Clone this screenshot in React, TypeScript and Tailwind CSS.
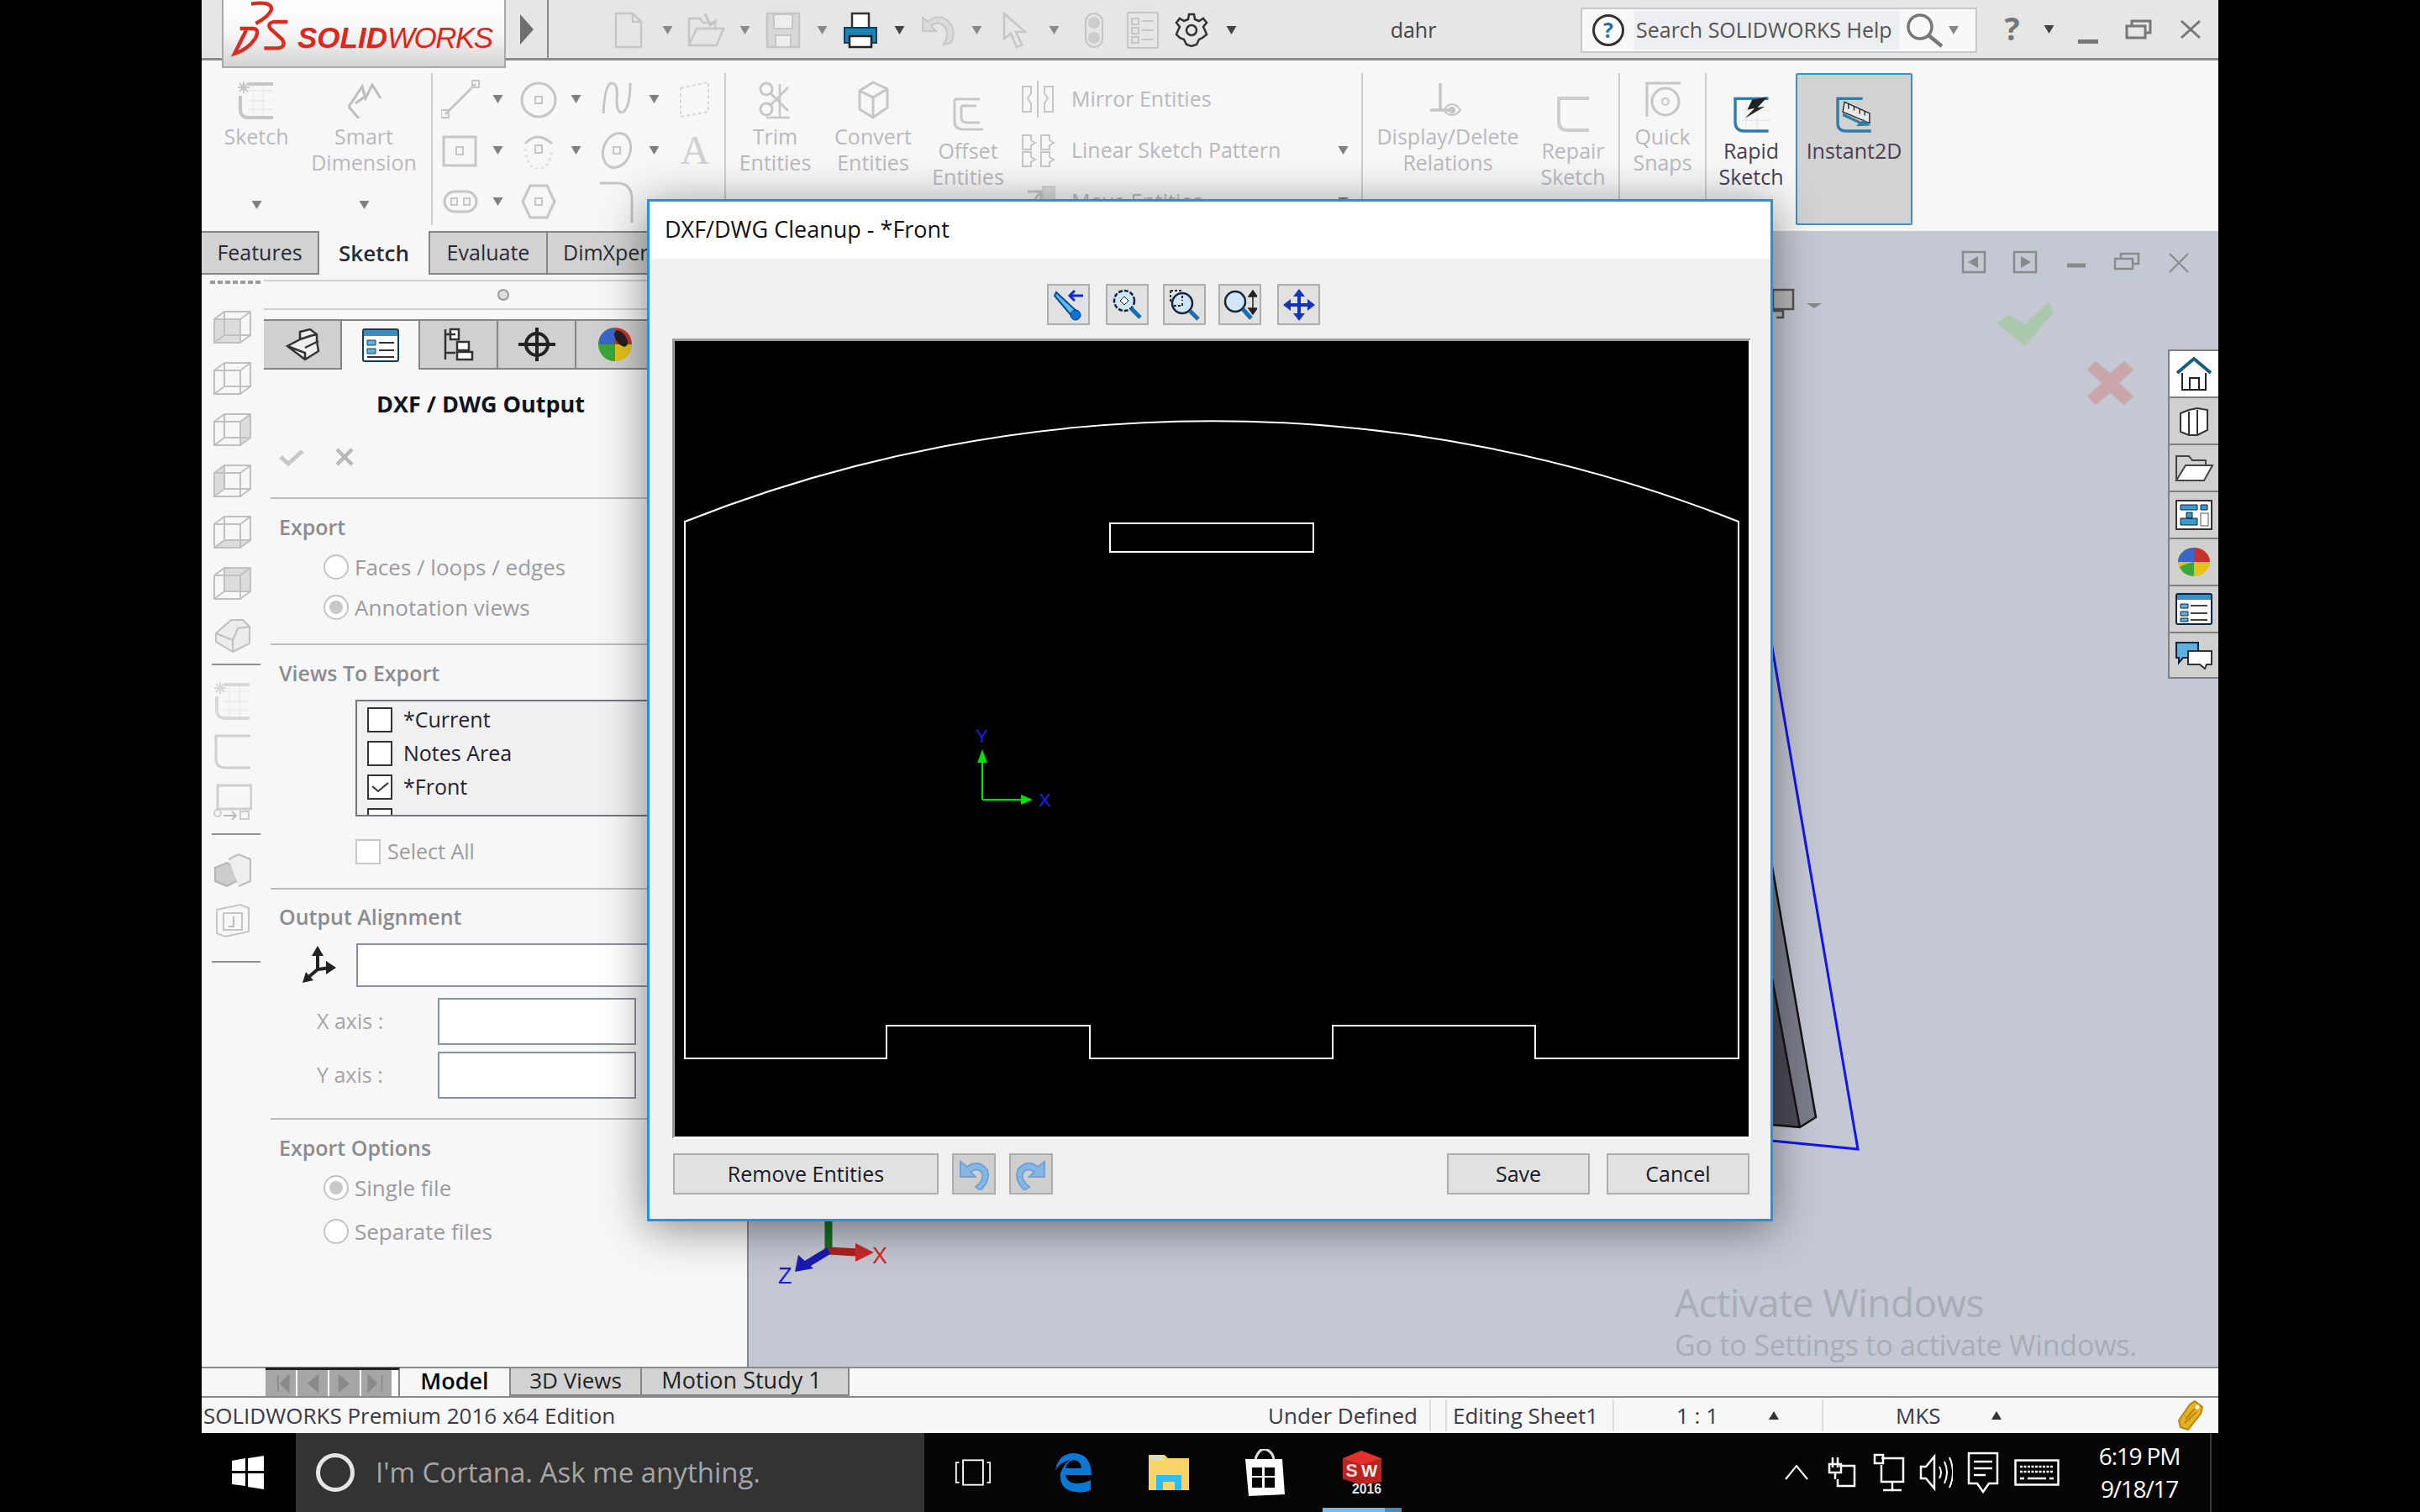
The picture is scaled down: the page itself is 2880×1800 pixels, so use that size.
import React from 'react';

const G = '#c6c6c6';

function Caret({ c = '#808080', up = false, w = 13 }: { c?: string; up?: boolean; w?: number }) {
  return (
    <svg width={w} height={10} viewBox="0 0 12 10">
      <path d={up ? 'M6 0L12 10H0Z' : 'M0 0H12L6 10Z'} fill={c} />
    </svg>
  );
}

function Svg({ w, h, children, vb }: { w: number; h: number; children: React.ReactNode; vb?: string }) {
  return (
    <svg width={w} height={h} viewBox={vb || `0 0 ${w} ${h}`} fill="none">
      {children}
    </svg>
  );
}

function SketchIcon({ color = G, star = true }: { color?: string; star?: boolean }) {
  return (
    <Svg w={48} h={50}>
      {star && <path d="M9 3V17M2 10H16M4 5L14 15M14 5L4 15" stroke={color} strokeWidth="2" />}
      <path d="M14 6H44M5 20V36Q5 46 15 46H44" stroke={color} strokeWidth="4" />
      <path d="M14 14H44M14 26H44M14 36H44M20 8V44M32 8V44" stroke="#ececec" strokeWidth="1.5" />
    </Svg>
  );
}

function RibbonBtn({ w, lines, icon, offset, caret, color = 'text-[#b9b9be]', active }: { w: string; lines: string[]; icon: React.ReactNode; offset?: string; caret?: boolean; color?: string; active?: boolean }) {
  return (
    <div className={`${w} h-[181px] shrink-0 flex flex-col items-center ${offset || ''} ${active ? 'bg-[#d2d2d2] border-2 border-[#3d8fc4] rounded-[2px]' : ''}`}>
      <div className="h-[56px] mt-[4px] flex items-center justify-center shrink-0">{icon}</div>
      {lines.map((l) => (
        <div key={l} className={`h-[31px] leading-[31px] text-[25px] whitespace-nowrap ${color}`}>{l}</div>
      ))}
      {caret && (
        <div className="mt-auto pb-[19px]">
          <Caret />
        </div>
      )}
    </div>
  );
}

function Sep({ className = '' }: { className?: string }) {
  return <div className={`w-[2px] h-[181px] bg-[#cfcfcf] shrink-0 ${className}`} />;
}

function Small({ children, caret }: { children: React.ReactNode; caret?: boolean }) {
  return (
    <div className="h-[61px] w-[93px] flex items-center">
      <div className="w-[66px] flex justify-center">{children}</div>
      {caret && <div className="ml-[5px] flex"><Caret /></div>}
    </div>
  );
}

function Cube({ face }: { face: number }) {
  const faces: Record<number, string> = {
    0: 'M3 12H34V40H3Z',
    1: '',
    2: 'M34 12L46 3V31L34 40Z',
    3: 'M3 12L15 3V31L3 40Z',
    4: 'M3 40L15 31H46L34 40Z',
    5: 'M15 3H46V31H15Z',
  };
  return (
    <Svg w={50} h={44}>
      {faces[face] && <path d={faces[face]} fill="#dcdcdc" />}
      <path d="M3 12H34V40H3ZM3 12L15 3H46V31L34 40M34 12L46 3M15 3V31H46M15 31L3 40" stroke="#c0c0c0" strokeWidth="2" />
    </Svg>
  );
}

function TopBar() {
  return (
    <div className="h-[72px] shrink-0 bg-[#e6e6e6] border-b-[3px] border-[#8c8c8c] flex pl-[24px] relative z-10">
      <div className="w-[338px] h-[81px] shrink-0 border-2 border-t-0 border-[#a8a8a8] bg-gradient-to-b from-white via-[#f6f6f6] to-[#d4d4d4] relative flex items-center pl-[88px]">
        <svg className="absolute left-[7px] top-[0px]" width="74" height="70" viewBox="40 0 222 210" fill="none" stroke="#dc2a1e" strokeWidth="13">
          <path d="M118 14Q192 2 190 34Q182 58 134 84" />
          <path d="M78 102H122Q150 102 132 138Q104 178 58 192L100 108" />
          <path d="M248 78H198Q172 84 188 104L228 140Q244 168 214 172H164" />
        </svg>
        <span className="text-[35px] leading-none italic text-[#e0251b] font-['Liberation_Sans',sans-serif] whitespace-nowrap mt-[10px]">
          <b>SOLID</b><span className="tracking-[-1.5px]">WORKS</span>
        </span>
      </div>
      <div className="w-[49px] shrink-0 flex items-center justify-center pt-[1px]">
        <svg width="16" height="36" viewBox="0 0 16 36"><path d="M0 0L16 18L0 36Z" fill="#6e6e6e" /></svg>
      </div>
      <div className="w-[2px] shrink-0 bg-[#8c8c8c]" />
      <div className="w-[67px] shrink-0" />
      {[
        <Svg w={34} h={44}><path d="M2 2H22L32 12V42H2ZM22 2V12H32" stroke={G} strokeWidth="2.5" /></Svg>,
        <Svg w={46} h={44}><path d="M3 40V8H16L20 13H34V20M3 40L12 20H44L36 40Z" stroke={G} strokeWidth="2.5" /><path d="M22 2L28 16L36 10" stroke={G} strokeWidth="3" /></Svg>,
        <Svg w={42} h={44}><path d="M2 2H40V42H2Z" fill="#d8d8d8" stroke={G} strokeWidth="2.5" /><path d="M10 3H32V20H10ZM12 28H30V42H12Z" fill="#eee" stroke={G} strokeWidth="2" /></Svg>,
        <Svg w={42} h={44}><path d="M11 2H31V20H11Z" fill="#fff" stroke="#333" strokeWidth="2.5" /><path d="M2 19H40V37H2Z" fill="#1c83b5" stroke="#0f3f5e" strokeWidth="2" /><path d="M8 29H34V42H8Z" fill="#fff" stroke="#222" strokeWidth="2.5" /></Svg>,
        <Svg w={42} h={42}><path d="M3 6V22H19L13 16Q22 8 30 18Q35 26 28 38L37 36Q44 20 33 10Q22 0 9 11Z" fill="#dadada" stroke={G} strokeWidth="2" /></Svg>,
        <Svg w={30} h={44}><path d="M2 2V32L10 26L17 42L23 39L16 24H27Z" stroke={G} strokeWidth="2.5" /></Svg>,
      ].map((ic, i) => (
        <div key={i} className="w-[92px] flex items-center shrink-0 pt-[3px]">
          <div className="w-[56px] flex justify-center">{ic}</div>
          <div className="w-[36px] flex justify-center"><Caret c={i === 3 ? '#444' : '#8a8a8a'} /></div>
        </div>
      ))}
      <div className="w-[60px] shrink-0 flex items-center justify-center pt-[3px]">
        <Svg w={24} h={44}><rect x="2" y="2" width="20" height="40" rx="10" stroke={G} strokeWidth="2" /><circle cx="12" cy="13" r="7" fill="#ccc" /><circle cx="12" cy="31" r="7" fill="#ccc" /></Svg>
      </div>
      <div className="w-[56px] shrink-0 flex items-center justify-center pt-[3px]">
        <Svg w={38} h={44}><rect x="1" y="1" width="36" height="42" stroke={G} strokeWidth="2" /><path d="M6 8H14V15H6ZM6 19H14V26H6ZM6 30H14V37H6ZM18 11H32M18 22H32M18 33H32" stroke={G} strokeWidth="2" /></Svg>
      </div>
      <div className="w-[59px] shrink-0 flex items-center justify-center pt-[3px]">
        <Svg w={40} h={42}>
          <circle cx="20" cy="21" r="6" stroke="#333" strokeWidth="2.5" />
          <path d="M17 2H23L24 8L29 10L34 7L38 12L34 17L36 21L38 26L33 30L29 32L26 38L20 40L14 38L11 32L6 30L2 26L4 21L6 17L2 12L6 7L11 10L16 8Z" stroke="#333" strokeWidth="2.5" />
        </Svg>
      </div>
      <div className="w-[36px] shrink-0 flex items-center justify-center pt-[3px]"><Caret c="#444" /></div>
      <div className="w-[398px] shrink-0 text-center text-[25px] leading-[70px] text-[#444]">dahr</div>
      <div className="w-[472px] h-[54px] mt-[9px] border-2 border-[#c8c8c8] bg-[#f8f8f8] flex items-center shrink-0">
        <div className="w-[62px] flex justify-center">
          <div className="w-[38px] h-[38px] rounded-full border-[3px] border-[#333] bg-white flex items-center justify-center text-[25px] font-bold text-[#1c6ea4]">?</div>
        </div>
        <div className="w-[316px] h-[46px] bg-[#eceef2] text-[25px] leading-[44px] text-[#555] whitespace-nowrap pl-[2px]">Search SOLIDWORKS Help</div>
        <div className="w-[58px] flex justify-center">
          <Svg w={46} h={42}><circle cx="18" cy="17" r="14" stroke="#777" strokeWidth="3.5" /><path d="M28 27L44 40" stroke="#777" strokeWidth="4.5" /></Svg>
        </div>
        <Caret c="#888" w={12} />
      </div>
      <div className="w-[65px] ml-[9px] shrink-0 text-center text-[38px] leading-[66px] font-bold text-[#777]">?</div>
      <div className="w-[22px] shrink-0 flex items-center justify-center"><Caret c="#444" /></div>
      <div className="w-[72px] shrink-0 flex items-end justify-center pb-[17px]"><div className="w-[24px] h-[5px] bg-[#777]" /></div>
      <div className="w-[48px] shrink-0 flex items-center justify-center">
        <Svg w={32} h={24}><path d="M8 8V2H30V16H24M2 8H24V22H2Z" stroke="#777" strokeWidth="3" /></Svg>
      </div>
      <div className="w-[69px] shrink-0 pl-[6px] flex items-center justify-center">
        <Svg w={26} h={24}><path d="M2 2L24 22M24 2L2 22" stroke="#777" strokeWidth="3" /></Svg>
      </div>
    </div>
  );
}

function Ribbon() {
  const s = { stroke: G, strokeWidth: 3 };
  return (
    <div className="h-[203px] shrink-0 bg-[#f7f7f7] flex pt-[15px]">
      <RibbonBtn w="w-[130px]" lines={['Sketch']} caret icon={<SketchIcon />} />
      <RibbonBtn
        w="w-[126px]"
        lines={['Smart', 'Dimension']}
        caret
        icon={<Svg w={44} h={44}><path d="M4 30L20 6L24 20L32 4L42 20M4 30L16 44M12 26L26 16" stroke="#bdbdbd" strokeWidth="3" /></Svg>}
      />
      <div className="w-[17px]" />
      <Sep />
      <div className="w-[347px] shrink-0 grid grid-cols-[repeat(4,auto)] content-start justify-start">
        <Small caret><Svg w={46} h={46}><path d="M5 41L41 5" {...s} /><rect x="0" y="36" width="9" height="9" stroke={G} strokeWidth="2" /><rect x="37" y="1" width="8" height="8" stroke={G} strokeWidth="2" /></Svg></Small>
        <Small caret><Svg w={46} h={46}><circle cx="23" cy="24" r="20" {...s} /><rect x="19" y="20" width="8" height="8" stroke={G} strokeWidth="2" /></Svg></Small>
        <Small caret><Svg w={40} h={46}><path d="M4 40Q6 4 14 4Q22 4 20 24Q20 42 28 38Q36 32 36 4" {...s} /></Svg></Small>
        <Small><Svg w={40} h={46}><path d="M3 10L36 3V38L3 44Z" stroke="#d6d6d6" strokeWidth="2" strokeDasharray="4 3" /></Svg></Small>
        <Small caret><Svg w={46} h={44}><rect x="3" y="6" width="38" height="34" {...s} /><rect x="18" y="18" width="8" height="9" stroke={G} strokeWidth="2" /></Svg></Small>
        <Small caret><Svg w={44} h={44}><path d="M6 14Q20 -2 38 14" {...s} /><path d="M6 20Q8 44 22 44Q36 44 38 20" stroke="#e0e0e0" strokeWidth="3" strokeDasharray="3 4" /><rect x="18" y="16" width="8" height="9" stroke={G} strokeWidth="2" /></Svg></Small>
        <Small caret><Svg w={40} h={48}><ellipse cx="20" cy="24" rx="16" ry="21" transform="rotate(20 20 24)" {...s} /><rect x="16" y="20" width="8" height="8" stroke={G} strokeWidth="2" /></Svg></Small>
        <Small><span className="text-[48px] leading-none text-[#d0d0d0] font-['Liberation_Serif',serif]">A</span></Small>
        <Small caret><Svg w={42} h={30}><rect x="2" y="3" width="38" height="24" rx="12" {...s} /><rect x="10" y="11" width="7" height="8" stroke={G} strokeWidth="2" /><rect x="25" y="11" width="7" height="8" stroke={G} strokeWidth="2" /></Svg></Small>
        <Small><Svg w={42} h={44}><path d="M11 3H31L40 22L31 41H11L2 22Z" {...s} /><rect x="17" y="18" width="8" height="8" stroke={G} strokeWidth="2" /></Svg></Small>
        <Small><Svg w={44} h={50}><path d="M2 3H22Q40 3 40 22V50" {...s} /></Svg></Small>
      </div>
      <Sep />
      <RibbonBtn w="w-[117px]" lines={['Trim', 'Entities']} icon={<Svg w={42} h={46}><circle cx="10" cy="10" r="7" {...s} /><circle cx="10" cy="34" r="7" {...s} /><path d="M14 14L36 36M14 30L36 8M26 4V44M10 44H38" stroke={G} strokeWidth="2.5" /></Svg>} />
      <RibbonBtn w="w-[116px]" lines={['Convert', 'Entities']} icon={<Svg w={40} h={46}><path d="M20 2L37 10V32L20 44L4 34V12ZM4 12L20 20L37 10M20 20V44" {...s} /></Svg>} />
      <RibbonBtn w="w-[110px]" offset="pt-[17px]" lines={['Offset', 'Entities']} icon={<Svg w={40} h={44}><path d="M4 4H34M4 4V30Q4 40 14 40H38M12 12H30M12 12V26Q12 32 20 32H34" stroke="#c8c8c8" strokeWidth="3" /></Svg>} />
      <div className="w-[413px] shrink-0">
        {[
          ['Mirror Entities', <Svg w={42} h={46}><path d="M20 1V45" stroke={G} strokeWidth="2" /><path d="M2 8H12V16L8 22L12 28V38H2ZM38 8H28V16L32 22L28 28V38H38Z" stroke={G} strokeWidth="2" /></Svg>, false],
          ['Linear Sketch Pattern', <Svg w={42} h={40}><path d="M2 2H12V8L17 11L12 14V19H2ZM24 2H34V8L39 11L34 14V19H24ZM2 22H12V28L17 31L12 34V39H2ZM24 22H34V28L39 31L34 34V39H24Z" stroke={G} strokeWidth="2" /></Svg>, true],
          ['Move Entities', <Svg w={42} h={40}><path d="M2 38L22 10M8 8H24V24" stroke={G} strokeWidth="3" /><rect x="26" y="2" width="14" height="34" fill="#ddd" stroke={G} /></Svg>, true],
        ].map(([t, ic, car], i) => (
          <div key={i} className="h-[61px] flex items-center pl-[8px]">
            <div className="w-[42px] flex justify-center">{ic as React.ReactNode}</div>
            <div className="w-[310px] pl-[18px] text-[25px] text-[#b9b9be] whitespace-nowrap">{t as string}</div>
            {car ? <div className="pl-[25px] flex"><Caret /></div> : null}
          </div>
        ))}
      </div>
      <Sep />
      <RibbonBtn w="w-[202px]" lines={['Display/Delete', 'Relations']} icon={<Svg w={46} h={44}><path d="M14 2V34M2 34H26" stroke={G} strokeWidth="3.5" /><path d="M18 34Q28 20 38 34Q28 46 18 34Z" stroke={G} strokeWidth="2" /><circle cx="28" cy="34" r="4" fill={G} /></Svg>} />
      <RibbonBtn w="w-[96px]" offset="pt-[17px]" lines={['Repair', 'Sketch']} icon={<Svg w={42} h={44}><path d="M40 3H4V30Q4 41 14 41H40" stroke="#cdcdcd" strokeWidth="4" /></Svg>} />
      <div className="w-[6px]" />
      <Sep />
      <RibbonBtn w="w-[101px]" lines={['Quick', 'Snaps']} icon={<Svg w={44} h={44}><path d="M1 2H43M3 2V42" stroke={G} strokeWidth="3" /><circle cx="25" cy="24" r="16" {...s} /><circle cx="25" cy="24" r="4" stroke={G} strokeWidth="2" /></Svg>} />
      <Sep />
      <RibbonBtn
        w="w-[106px]"
        offset="pt-[17px]"
        color="text-[#4a3f55]"
        lines={['Rapid', 'Sketch']}
        icon={<Svg w={47} h={47} vb="485 105 140 140"><path d="M520 160H620M520 195H620M535 130V235M575 150V235" stroke="#e4e4e4" strokeWidth="3" /><path d="M615 118H497V200Q497 233 530 233H615" stroke="#2f7da6" strokeWidth="10" /><path d="M612 112L557 122L540 158L566 152L532 188L602 146L576 150Z" fill="#222" /></Svg>}
      />
      <RibbonBtn
        w="w-[139px]"
        active
        offset="pt-[15px]"
        color="text-[#4a3f55]"
        lines={['Instant2D']}
        icon={<Svg w={47} h={47} vb="850 105 140 140"><path d="M950 118H862V205Q862 233 890 233H980" stroke="#2f7da6" strokeWidth="10" /><path d="M886 130L975 170V205L880 165Z" fill="#e8e8e8" stroke="#222" strokeWidth="4" /><path d="M900 137V155M920 146V160M940 154V172M958 162V178" stroke="#222" strokeWidth="4" /><path d="M880 168L945 200L952 190L978 214L928 216L936 206L880 180Z" fill="#2f7da6" /></Svg>}
      />
    </div>
  );
}

function Line() {
  return <div className="h-[2px] bg-[#bdbdbd] ml-[8px]" />;
}

function Label({ children }: { children: React.ReactNode }) {
  return <div className="h-[34px] leading-[34px] text-[25px] font-semibold text-[#8c8c90] pl-[10px] whitespace-nowrap">{children}</div>;
}

function Radio({ label, on, cls }: { label: string; on?: boolean; cls: string }) {
  return (
    <div className={`flex items-center pl-[63px] ${cls}`}>
      <div className="w-[30px] h-[30px] rounded-full border-2 border-[#c4c4c4] bg-white flex items-center justify-center shrink-0">
        {on && <div className="w-[16px] h-[16px] rounded-full bg-[#c8c8c8]" />}
      </div>
      <span className="ml-[7px] text-[26px] text-[#9b9ba0] whitespace-nowrap">{label}</span>
    </div>
  );
}

function Check({ on }: { on?: boolean }) {
  return (
    <div className="w-[30px] h-[30px] border-2 border-[#333] bg-white shrink-0 flex items-center justify-center">
      {on && <Svg w={24} h={18}><path d="M3 8L10 14L22 4" stroke="#333" strokeWidth="2" /></Svg>}
    </div>
  );
}

function PM() {
  const tabs = [
    <Svg w={42} h={40}><path d="M3 22L18 14V5L30 2L38 8V16L40 28L24 38Z M18 14L30 10L38 8M24 24L40 16M3 22L24 30V38" stroke="#333" strokeWidth="2.5" fill="#eee" /></Svg>,
    <Svg w={44} h={40}><rect x="1" y="1" width="42" height="38" rx="2" fill="#fff" stroke="#0f3f5e" strokeWidth="2" /><rect x="2" y="2" width="40" height="7" fill="#3a8fc0" /><path d="M6 14H16V20H6ZM6 24H16V30H6Z" fill="#5fb0da" stroke="#0f3f5e" /><path d="M20 17H38M20 26H38M6 34H38" stroke="#333" strokeWidth="2" /></Svg>,
    <Svg w={36} h={40}><path d="M2 2V38M2 8H14M2 30H14M8 2H18V14H8ZM16 17H30V27H16ZM16 29H34V38H16Z" stroke="#333" strokeWidth="2.5" fill="#fff" /></Svg>,
    <Svg w={44} h={40}><circle cx="22" cy="20" r="13" stroke="#222" strokeWidth="4" /><path d="M0 20H44M22 0V40" stroke="#222" strokeWidth="4" /></Svg>,
    <Svg w={44} h={40}><circle cx="22" cy="20" r="20" fill="#e3c21b" /><path d="M2 20A20 20 0 0 1 22 0V20Z" fill="#3a66c8" /><path d="M22 0A20 20 0 0 1 42 20H22Z" fill="#c8322e" /><path d="M2 20H22V40A20 20 0 0 1 2 20Z" fill="#3aa63c" /><ellipse cx="29" cy="13" rx="6" ry="11" fill="#222" transform="rotate(-35 29 13)" /></Svg>,
  ];
  return (
    <div className="w-[516px] shrink-0">
      <div className="h-[8px] border-b-2 border-[#cfcfcf]" />
      <div className="h-[34px] flex items-center justify-center border-b-2 border-[#cfcfcf] pl-[54px]">
        <div className="w-[14px] h-[14px] rounded-full border-2 border-[#999] bg-[#ddd]" />
      </div>
      <div className="mt-[11px] h-[60px] flex">
        {tabs.map((t, i) => (
          <div key={i} className={`w-[93px] h-[60px] shrink-0 flex items-center justify-center border-t-2 border-r-2 border-[#858585] ${i === 1 ? 'bg-[#f7f7f7] border-b-0' : 'bg-[#d0d0d0] border-b-2'}`}>{t}</div>
        ))}
        <div className="flex-1 bg-[#d0d0d0] border-t-2 border-b-2 border-[#858585]" />
      </div>
      <div className="h-[82px] flex items-center justify-center text-[27px] font-bold text-[#10131c] whitespace-nowrap">DXF / DWG Output</div>
      <div className="h-[70px] flex items-start pt-[10px] pl-[18px]">
        <Svg w={30} h={24}><path d="M2 12L11 20L28 5" stroke="#c6c6c6" strokeWidth="5" /></Svg>
        <div className="w-[36px]" />
        <Svg w={24} h={24}><path d="M3 3L21 21M21 3L3 21" stroke="#b8b8b8" strokeWidth="4.5" /></Svg>
      </div>
      <Line />
      <div className="h-[172px] pt-[16px] ml-[8px]">
        <Label>Export</Label>
        <Radio cls="h-[48px] mt-[7px]" label="Faces / loops / edges" />
        <Radio cls="h-[48px]" on label="Annotation views" />
      </div>
      <Line />
      <div className="h-[289px] pt-[16px] ml-[8px]">
        <Label>Views To Export</Label>
        <div className="mt-[15px] ml-[101px] h-[139px] border-2 border-[#75757d] border-r-0 bg-[#f0f0f0] pl-[12px] pt-[2px] overflow-hidden">
          {[['*Current', false], ['Notes Area', false], ['*Front', true], ['', false]].map(([t, on], i) => (
            <div key={i} className="h-[40px] flex items-center">
              <Check on={on as boolean} />
              <span className="ml-[13px] text-[25px] text-[#222230]">{t as string}</span>
            </div>
          ))}
        </div>
        <div className="mt-[27px] ml-[101px] h-[30px] flex items-center">
          <div className="w-[30px] h-[30px] border-2 border-[#c8c8c8] bg-white" />
          <span className="ml-[8px] text-[25px] text-[#9b9ba0]">Select All</span>
        </div>
      </div>
      <Line />
      <div className="h-[272px] pt-[15px] ml-[8px]">
        <Label>Output Alignment</Label>
        <div className="mt-[15px] h-[52px] flex items-center">
          <div className="w-[102px] pl-[36px]">
            <Svg w={44} h={46}><path d="M20 4V28M20 28L36 26M20 28L6 40" stroke="#222" strokeWidth="4" /><path d="M20 0L27 12H13ZM42 26L30 34V18ZM2 44L6 31L15 41Z" fill="#222" /></Svg>
          </div>
          <div className="flex-1 h-[52px] border-2 border-[#8b8fa3] bg-white" />
        </div>
        <div className="mt-[13px] h-[56px] flex items-center">
          <div className="w-[199px] pl-[55px] text-[25px] text-[#a4a4a8]">X axis :</div>
          <div className="w-[236px] h-[56px] border-2 border-[#8b8fa3] bg-white" />
        </div>
        <div className="mt-[8px] h-[56px] flex items-center">
          <div className="w-[199px] pl-[55px] text-[25px] text-[#a4a4a8]">Y axis :</div>
          <div className="w-[236px] h-[56px] border-2 border-[#8b8fa3] bg-white" />
        </div>
      </div>
      <Line />
      <div className="pt-[16px] ml-[8px]">
        <Label>Export Options</Label>
        <Radio cls="h-[40px] mt-[11px]" on label="Single file" />
        <Radio cls="h-[40px] mt-[12px]" label="Separate files" />
      </div>
    </div>
  );
}

function LeftToolbar() {
  const sep = 'h-[2px] bg-[#8f8f8f] w-[58px] ml-[12px]';
  const cell = 'h-[61px] flex items-center justify-center';
  return (
    <div className="w-[74px] shrink-0">
      <div className="h-[18px] flex items-center justify-center gap-[3px] pl-[6px]">
        {[0, 1, 2, 3, 4, 5, 6].map((i) => <div key={i} className="w-[6px] h-[4px] bg-[#9a9a9a]" />)}
      </div>
      <div className="mt-[14px]">
        {[0, 1, 2, 3, 4, 5].map((f) => <div key={f} className={cell}><Cube face={f} /></div>)}
        <div className={cell}>
          <Svg w={44} h={44}><path d="M2 20L20 4H34L42 12V32L22 42L2 30Z" fill="#ececec" stroke="#c0c0c0" strokeWidth="2" /><path d="M2 20L22 28V42M22 28L28 14L42 12" stroke="#c0c0c0" strokeWidth="2" /></Svg>
        </div>
      </div>
      <div className={`mt-[4px] ${sep}`} />
      <div className="mt-[11px]">
        <div className={cell}><SketchIcon color="#d8d8d8" /></div>
        <div className={cell}><Svg w={46} h={44}><path d="M44 3H3V30Q3 41 14 41H44" stroke="#cfcfcf" strokeWidth="3" /></Svg></div>
        <div className={cell}><Svg w={46} h={46}><rect x="5" y="2" width="40" height="28" stroke="#cfcfcf" strokeWidth="3" /><circle cx="5" cy="35" r="4" stroke="#ccc" strokeWidth="2" /><path d="M12 38H26M22 33L27 38L22 43" stroke="#bbb" strokeWidth="2" /><rect x="32" y="33" width="10" height="9" stroke="#ccc" strokeWidth="2" /></Svg></div>
      </div>
      <div className={`mt-[6px] ${sep}`} />
      <div className="mt-[11px]">
        <div className={cell}><Svg w={46} h={42}><path d="M2 18L16 12L28 18V34L16 40L2 34Z" fill="#ccc" stroke="#b5b5b5" strokeWidth="2" /><path d="M18 8L30 2L44 8V34L30 40" fill="#eee" stroke="#bdbdbd" strokeWidth="2" /></Svg></div>
        <div className="h-[60px] flex items-center justify-center"><Svg w={42} h={42}><path d="M2 8L30 2L40 6V34L12 40L2 36Z" stroke="#c6c6c6" strokeWidth="2" /><path d="M10 12H32V32H10Z" stroke="#c6c6c6" strokeWidth="2" /><path d="M22 16V28H16" stroke="#bbb" strokeWidth="2" /></Svg></div>
      </div>
      <div className={`mt-[18px] ${sep}`} />
    </div>
  );
}

function Tabs() {
  const t = 'h-[50px] flex items-center justify-center text-[25px] shrink-0 border-t-2 border-r-2 border-[#858585] text-[#2a2a36]';
  return (
    <div className="h-[52px] shrink-0 flex bg-[#cfcfcf] border-b-2 border-[#858585]">
      <div className={`${t} w-[140px] bg-[#d2d2d2]`}>Features</div>
      <div className="h-[52px] flex items-center justify-center shrink-0 w-[130px] bg-[#f7f7f7] font-semibold text-[26px] text-[#2a2a36] relative z-[1]">Sketch</div>
      <div className={`${t} w-[142px] bg-[#d2d2d2] border-l-2`}>Evaluate</div>
      <div className={`${t} w-[239px] bg-[#d2d2d2] justify-start pl-[18px]`}>DimXpert</div>
    </div>
  );
}

function Viewport() {
  return (
    <div className="flex-1 relative bg-[#c4c8d3] overflow-hidden">
      <svg className="absolute left-0 top-0" width="1749" height="1352" viewBox="891 275 1749 1352" fill="none">
        <path d="M2108 1026L2161 1330L2142 1342L2108 1162Z" fill="#7b7e8b" />
        <path d="M2108 1160L2142 1342L2108 1339Z" fill="#4a4b55" />
        <path d="M2108 1026L2161 1330L2142 1342L2108 1339M2108 1160L2142 1342" stroke="#141414" strokeWidth="2.5" />
        <path d="M2100 718L2211 1368L2108 1358" stroke="#1414f0" strokeWidth="3" />
        <path d="M2110 345H2134V368H2110ZM2114 378H2122V370H2110" stroke="#555" strokeWidth="2.5" fill="#bbb" />
        <path d="M2150 361H2168L2159 367Z" fill="#888" />
        <path d="M986 1454V1489" stroke="#166d25" strokeWidth="9" />
        <path d="M986 1489L1020 1491" stroke="#b02020" strokeWidth="9" />
        <path d="M1018 1480L1040 1491L1018 1502Z" fill="#c92b2b" />
        <path d="M986 1489L958 1506" stroke="#1a1ab4" strokeWidth="9" />
        <path d="M946 1514L950 1494L968 1510Z" fill="#1a1ab4" />
        <text x="1038" y="1504" fontSize="27" fill="#e02020" fontFamily="Liberation Sans">X</text>
        <text x="926" y="1528" fontSize="27" fill="#1a1ae0" fontFamily="Liberation Sans">Z</text>
        <g stroke="#8a8a8a" strokeWidth="2.5">
          <rect x="2336" y="300" width="26" height="24" />
          <rect x="2397" y="300" width="26" height="24" />
          <path d="M2460 316H2482" strokeWidth="5" />
          <path d="M2524 308V302H2545V314H2539M2517 308H2538V320H2517Z" />
          <path d="M2582 302L2604 324M2604 302L2582 324" strokeWidth="2" />
        </g>
        <path d="M2354 305V319L2342 312ZM2405 305V319L2417 312Z" fill="#8a8a8a" />
        <path d="M2376 385L2390 375L2410 386L2438 360L2444 372L2410 412Z" fill="#a9c8ae" />
        <path d="M2484 440L2494 430L2511 444L2528 430L2539 440L2522 456L2539 472L2528 482L2511 468L2494 482L2484 472L2501 456Z" fill="#c9a6aa" />
      </svg>
      <div className="absolute right-0 top-[141px] w-[60px] border-l-2 border-[#808080] flex flex-col">
        {[
          <Svg w={44} h={42}><path d="M2 20L22 3L42 20" stroke="#185c82" strokeWidth="4" /><path d="M8 20V40H36V20M17 40V26H28V40" stroke="#222" strokeWidth="2" /></Svg>,
          <Svg w={36} h={38}><path d="M2 10L12 6L22 4L34 6V30L22 36L12 36L2 32Z" fill="#fff" stroke="#333" strokeWidth="2" /><path d="M12 8V36M22 6V36" stroke="#333" strokeWidth="2" /></Svg>,
          <Svg w={48} h={34}><path d="M3 32V3H18L22 8H38V14" stroke="#444" strokeWidth="2" /><path d="M3 32L14 14H46L36 32Z" fill="#fff" stroke="#444" strokeWidth="2" /></Svg>,
          <Svg w={44} h={36}><rect x="1" y="1" width="42" height="34" stroke="#333" strokeWidth="2" fill="#fff" /><path d="M6 6H26V12H6ZM30 6H38V12H30ZM6 22H26V30H6ZM13 15H20V22H13Z" fill="#3a9bc9" stroke="#124" /><rect x="30" y="16" width="9" height="15" stroke="#555" /></Svg>,
          <Svg w={40} h={36}><ellipse cx="20" cy="18" rx="19" ry="17" fill="#e3c21b" /><path d="M1 18A19 17 0 0 1 20 1V18Z" fill="#3a66c8" /><path d="M20 1A19 17 0 0 1 39 18H20Z" fill="#c8322e" /><path d="M3 24Q10 20 20 18V35Q8 35 3 24Z" fill="#3aa63c" /></Svg>,
          <Svg w={44} h={38}><rect x="1" y="1" width="42" height="36" rx="2" fill="#fff" stroke="#124" strokeWidth="2" /><rect x="2" y="2" width="40" height="6" fill="#3a8fc0" /><path d="M6 13H15V18H6ZM6 22H15V27H6ZM6 30H15V34H6Z" fill="#5fb0da" stroke="#124" /><path d="M18 15H38M18 24H38M18 32H38" stroke="#444" strokeWidth="2" /></Svg>,
          <Svg w={46} h={34}><path d="M2 2H28V20H10L5 26V20H2Z" fill="#5fb0da" stroke="#124" strokeWidth="2" /><path d="M16 12H44V28H38L36 33L30 28H16Z" fill="#fff" stroke="#333" strokeWidth="2" /></Svg>,
        ].map((ic, i) => (
          <div key={i} className={`h-[56px] flex items-center justify-center border-t-2 border-[#808080] last:border-b-2 ${i === 0 ? 'bg-white' : 'bg-[#d0d0d0]'}`}>{ic}</div>
        ))}
      </div>
      <div className="absolute left-[1102px] top-[1247px] text-[#a8acb6] whitespace-nowrap">
        <div className="text-[46px] leading-[56px] tracking-[-0.6px]">Activate Windows</div>
        <div className="text-[34px] leading-[46px] tracking-[-0.2px]">Go to Settings to activate Windows.</div>
      </div>
    </div>
  );
}

function Middle() {
  return (
    <div className="h-[1352px] shrink-0 flex">
      <div className="w-[651px] shrink-0 bg-[#f7f7f7] border-r-2 border-[#888] flex flex-col overflow-hidden">
        <Tabs />
        <div className="flex">
          <LeftToolbar />
          <PM />
        </div>
      </div>
      <Viewport />
    </div>
  );
}

function ModelTabs() {
  const nav = ['M14 4V28M30 4L18 16L30 28Z', 'M26 4L12 16L26 28Z', 'M10 4L24 16L10 28Z', 'M6 4L18 16L6 28ZM26 4V28'];
  return (
    <div className="h-[35px] shrink-0 flex bg-[#f7f7f7] border-t-2 border-[#8a8a8a]">
      <div className="w-[76px]" />
      <div className="w-[160px] h-[35px] border-t-[3px] border-t-[#222] border-r-2 border-r-[#888] flex gap-[2px] pr-[8px] -mt-[1px] bg-white">
        {nav.map((d, i) => (
          <div key={i} className="flex-1 bg-[#a6a6a6] flex items-center justify-center">
            <Svg w={30} h={26} vb="0 0 36 32"><path d={d} fill="#8a8a8a" stroke="#8a8a8a" strokeWidth="2" /></Svg>
          </div>
        ))}
      </div>
      <div className="w-[130px] text-center text-[27px] leading-[30px] font-semibold text-black">Model</div>
      <div className="w-[158px] bg-[#d2d2d2] border-2 border-[#858585] border-t-0 text-center text-[26px] leading-[28px] text-[#222] whitespace-nowrap">3D Views</div>
      <div className="w-[247px] bg-[#d2d2d2] border-2 border-l-0 border-[#858585] border-t-0 text-center text-[27px] leading-[28px] text-[#222] whitespace-nowrap pr-[8px]">Motion Study 1</div>
    </div>
  );
}

function Status() {
  const sep = 'w-[2px] h-[38px] bg-[#dcdcdc] shrink-0';
  return (
    <div className="h-[44px] shrink-0 bg-[#f7f7f7] border-t-2 border-[#8a8a8a] flex items-center text-[26px] text-[#3a3a48] whitespace-nowrap">
      <div className="w-[1269px] pl-[2px]">SOLIDWORKS Premium 2016 x64 Edition</div>
      <div className="w-[192px]">Under Defined</div>
      <div className={sep} />
      <div className="w-[17px]" />
      <div className={sep} />
      <div className="w-[197px] pl-[7px]">Editing Sheet1</div>
      <div className={sep} />
      <div className="w-[247px] pl-[74px] flex items-center">
        <span className="w-[42px]">1 : 1</span>
        <span className="ml-[68px] flex"><Caret c="#333" up w={12} /></span>
      </div>
      <div className={sep} />
      <div className="pl-[86px] flex items-center">
        <span className="w-[60px]">MKS</span>
        <span className="ml-[54px] flex"><Caret c="#333" up w={12} /></span>
      </div>
      <div className="flex-1" />
      <div className="mr-[18px] flex">
        <Svg w={30} h={36}><path d="M20 1L29 8L27 16L12 35L3 32L1 24L14 5Z" fill="#e4b21e" stroke="#b98410" strokeWidth="2" /><path d="M9 22L20 10M8 27L22 14" stroke="#b98410" strokeWidth="2" /><circle cx="23" cy="8" r="2.5" fill="#fff" /></Svg>
      </div>
    </div>
  );
}

function Taskbar() {
  return (
    <div className="h-[94px] shrink-0 bg-[#050505] flex items-center relative">
      <div className="w-[112px] h-full bg-black flex items-center justify-center pr-[2px]">
        <Svg w={40} h={40}><path d="M1 6L17 3V18H1ZM20 3L39 0V18H20ZM1 21H17V36L1 34ZM20 21H39V40L20 37Z" fill="#fff" /></Svg>
      </div>
      <div className="w-[748px] h-full bg-[#333333] flex items-center pl-[24px]">
        <div className="w-[46px] h-[46px] rounded-full border-[5px] border-[#e4e4e4]" />
        <span className="ml-[25px] text-[33px] text-[#a6a6a6] whitespace-nowrap">I'm Cortana. Ask me anything.</span>
      </div>
      <div className="w-[36px]" />
      <div className="w-[44px] flex justify-center">
        <Svg w={48} h={36}><rect x="11" y="2" width="26" height="32" stroke="#fff" strokeWidth="2" /><path d="M6 5H2V31H6M42 5H46V31H42" stroke="#fff" strokeWidth="2" /></Svg>
      </div>
      <div className="w-[72px]" />
      <div className="w-[50px] flex justify-center">
        <Svg w={46} h={50}><path d="M2 22Q6 2 24 2Q44 2 45 28H14Q16 38 28 38Q36 38 44 34V46Q34 50 26 48Q6 46 8 26Q12 14 20 10Q8 12 2 22ZM14 20H33Q32 10 23 10Q16 12 14 20Z" fill="#0c78d4" fillRule="evenodd" /></Svg>
      </div>
      <div className="w-[64px]" />
      <div className="w-[50px] flex justify-center">
        <Svg w={50} h={46}><path d="M1 2H20L24 6H49V44H1Z" fill="#f8d468" /><path d="M3 3H18V8H3Z" fill="#bfe4f0" /><path d="M10 44V26H40V44H32V34H18V44Z" fill="#2bbdf5" /></Svg>
      </div>
      <div className="w-[64px]" />
      <div className="w-[50px] flex justify-center">
        <Svg w={50} h={56}><path d="M14 12Q18 0 25 0Q34 2 36 12" stroke="#ddd" strokeWidth="3" /><path d="M2 12H46L49 54L6 56Z" fill="#fff" /><path d="M10 22H22V32H10ZM25 22H37V32H25ZM10 34H22V46H10ZM25 34H37V46H25Z" fill="#050505" /></Svg>
      </div>
      <div className="w-[66px]" />
      <div className="w-[50px] flex justify-center relative">
        <Svg w={54} h={56}><path d="M2 10L26 0L52 10V40L26 44L2 36Z" fill="#b92422" /><path d="M2 10L26 18L52 10L26 0Z" fill="#e2302c" /><text x="6" y="33" fontSize="23" fill="#ead9d9" fontWeight="700" fontFamily="Liberation Sans">S</text><text x="26" y="33" fontSize="22" fill="#eee" fontWeight="700" fontFamily="Liberation Sans">W</text><text x="14" y="55" fontSize="17" fill="#e8e8e8" fontWeight="700" fontFamily="Liberation Sans">2016</text></Svg>
        <div className="absolute left-[-22px] bottom-[-19px] h-[5px] w-[94px] flex">
          <div className="w-[74px] bg-[#76b9ed]" />
          <div className="w-[20px] bg-[#4a89ba]" />
        </div>
      </div>
      <div className="w-[469px]" />
      <div className="w-[46px] flex justify-center"><Svg w={30} h={20}><path d="M2 18L15 2L28 18" stroke="#fff" strokeWidth="2" /></Svg></div>
      <div className="w-[59px] flex justify-center"><Svg w={36} h={40}><path d="M8 2V14M14 2V14M4 10H18V20H4ZM11 20V28M16 12H34V36H14V28" stroke="#fff" strokeWidth="2.5" /></Svg></div>
      <div className="w-[56px] flex justify-center"><Svg w={38} h={46}><path d="M2 2H12V12H2ZM10 6H36V34H10V14M23 34V44M12 44H34" stroke="#fff" strokeWidth="2.5" /></Svg></div>
      <div className="w-[56px] flex justify-center"><Svg w={40} h={46}><path d="M2 16V30H8L18 42V4L8 16Z" stroke="#fff" strokeWidth="2.5" /><path d="M24 16Q28 23 24 30M30 10Q36 23 30 36M36 5Q44 23 36 41" stroke="#fff" strokeWidth="2" /></Svg></div>
      <div className="w-[56px] flex justify-center"><Svg w={38} h={50}><path d="M2 2H36V38H26L19 48L12 38H2Z" stroke="#fff" strokeWidth="2.5" /><path d="M8 12H30M8 20H30M8 28H22" stroke="#fff" strokeWidth="2.5" /></Svg></div>
      <div className="w-[72px] flex justify-center"><Svg w={54} h={32}><rect x="1.5" y="1.5" width="51" height="29" stroke="#fff" strokeWidth="2.5" /><path d="M7 9H47M7 15H47" stroke="#fff" strokeWidth="2.5" strokeDasharray="3 1.5" /><path d="M7 23H12M16 23H38M42 23H47" stroke="#fff" strokeWidth="2.5" /></Svg></div>
      <div className="w-[120px] ml-[26px] text-center text-white text-[28px] leading-[39px] tracking-[-1.2px] whitespace-nowrap">
        <div>6:19 PM</div>
        <div>9/18/17</div>
      </div>
      <div className="flex-1" />
      <div className="w-[2px] h-full bg-[#3a3a3a] mr-[8px]" />
    </div>
  );
}

function Btn({ className, children }: { className: string; children?: React.ReactNode }) {
  return <div className={`h-[49px] border-2 border-[#adadad] flex items-center justify-center text-[25px] text-[#1b1b24] shrink-0 ${className}`}>{children}</div>;
}

function Dialog() {
  const b = 'bg-[#e1e1e1]';
  return (
    <div className="absolute left-[770px] top-[237px] w-[1340px] h-[1217px] z-20 border-[3px] border-[#2a8fdf] bg-[#f0f0f0] shadow-[0_8px_50px_rgba(0,0,0,0.45)] flex flex-col">
      <div className="h-[68px] bg-white shrink-0 pl-[18px] text-[27px] leading-[66px] text-[#111] whitespace-nowrap">DXF/DWG Cleanup - *Front</div>
      <div className="h-[95px] shrink-0 flex pt-[30px] pl-[473px]">
        <Btn className={`w-[51px] ${b}`}>
          <Svg w={38} h={38}><path d="M4 4L30 28L24 34L2 8Z" fill="#5fbcf0" stroke="#0b4c8a" strokeWidth="2" /><circle cx="27" cy="31" r="6" fill="#0b74d4" stroke="#06376c" /><path d="M36 8H20M26 2L20 8L26 14" stroke="#0b2fc4" strokeWidth="3" /></Svg>
        </Btn>
        <Btn className={`w-[51px] ml-[19px] ${b}`}>
          <Svg w={36} h={38}><circle cx="14" cy="14" r="12" fill="#cfe6fb" stroke="#15253a" strokeWidth="2.5" strokeDasharray="5 2" /><path d="M22 23L33 34" stroke="#1a6eb0" strokeWidth="5" /><path d="M9 14L14 9L19 14L14 19Z" fill="#fff" stroke="#123" /></Svg>
        </Btn>
        <Btn className={`w-[51px] ml-[17px] ${b}`}>
          <Svg w={38} h={38}><path d="M2 2H16M2 2V16" stroke="#222" strokeWidth="2" strokeDasharray="3 2" /><circle cx="16" cy="17" r="12" fill="#cfe6fb" stroke="#15253a" strokeWidth="2.5" /><path d="M16 8V14M6 20H16V16" stroke="#222" strokeWidth="2" strokeDasharray="3 2" /><path d="M25 26L35 36" stroke="#1a6eb0" strokeWidth="5" /></Svg>
        </Btn>
        <Btn className={`w-[51px] ml-[15px] ${b}`}>
          <Svg w={40} h={38}><circle cx="14" cy="15" r="12" fill="#cfe6fb" stroke="#15253a" strokeWidth="2.5" /><path d="M23 24L33 35" stroke="#1a6eb0" strokeWidth="5" /><path d="M35 6V26M35 2L30 9H40ZM35 30L30 23H40Z" fill="#222" stroke="#222" strokeWidth="1.5" /></Svg>
        </Btn>
        <Btn className={`w-[51px] ml-[19px] ${b}`}>
          <Svg w={38} h={38}><path d="M19 4V34M4 19H34" stroke="#1535b8" strokeWidth="4" /><path d="M19 0L26 9H12ZM19 38L12 29H26ZM0 19L9 12V26ZM38 19L29 26V12Z" fill="#1535b8" /></Svg>
        </Btn>
      </div>
      <div className="ml-[27px] w-[1284px] h-[953px] shrink-0 bg-black border-t-[3px] border-l-[3px] border-t-[#9c9c9c] border-l-[#9c9c9c] border-r-[3px] border-b-[3px] border-r-white border-b-white">
        <svg className="block" width="1278" height="947" viewBox="2 0 1278 947" fill="none">
          <path d="M14 215A1700 1700 0 0 1 1268 215V854H1026V815H785V854H496V815H254V854H14Z" stroke="#fff" strokeWidth="2" />
          <rect x="520" y="217" width="242" height="34" stroke="#fff" strokeWidth="2" />
          <path d="M368 546V496" stroke="#00e000" strokeWidth="2" />
          <path d="M368 486L374 502H362Z" fill="#00e000" />
          <path d="M368 546H420" stroke="#00e000" strokeWidth="2" />
          <path d="M428 546L414 552V540Z" fill="#00e000" />
          <text x="360" y="478" fontSize="22" fill="#1e1eff" fontFamily="Liberation Sans">Y</text>
          <text x="435" y="554" fontSize="22" fill="#1e1eff" fontFamily="Liberation Sans">X</text>
        </svg>
      </div>
      <div className="flex pt-[17px] pl-[28px]">
        <Btn className={`w-[316px] ${b}`}>Remove Entities</Btn>
        <Btn className="w-[52px] ml-[16px] bg-[#cfcfcf]">
          <Svg w={40} h={38}><path d="M4 4V22H22L16 16Q26 10 30 18Q32 26 22 34L28 38Q40 26 36 14Q26 0 12 10L4 4Z" fill="#86b6e4" stroke="#6ea3d6" strokeWidth="2" /></Svg>
        </Btn>
        <Btn className="w-[52px] ml-[16px] bg-[#cfcfcf]">
          <Svg w={40} h={38}><path d="M36 4V22H18L24 16Q14 10 10 18Q8 26 18 34L12 38Q0 26 4 14Q14 0 28 10L36 4Z" fill="#86b6e4" stroke="#6ea3d6" strokeWidth="2" /></Svg>
        </Btn>
        <div className="w-[469px]" />
        <Btn className={`w-[170px] ${b}`}>Save</Btn>
        <Btn className={`w-[170px] ml-[20px] ${b}`}>Cancel</Btn>
      </div>
    </div>
  );
}

export default function App() {
  return (
    <div className="w-[2880px] h-[1800px] bg-black flex relative overflow-hidden font-['Open_Sans',sans-serif]">
      <div className="w-[240px] shrink-0 bg-black" />
      <div className="w-[2400px] shrink-0 flex flex-col">
        <TopBar />
        <Ribbon />
        <Middle />
        <ModelTabs />
        <Status />
        <Taskbar />
      </div>
      <Dialog />
    </div>
  );
}
